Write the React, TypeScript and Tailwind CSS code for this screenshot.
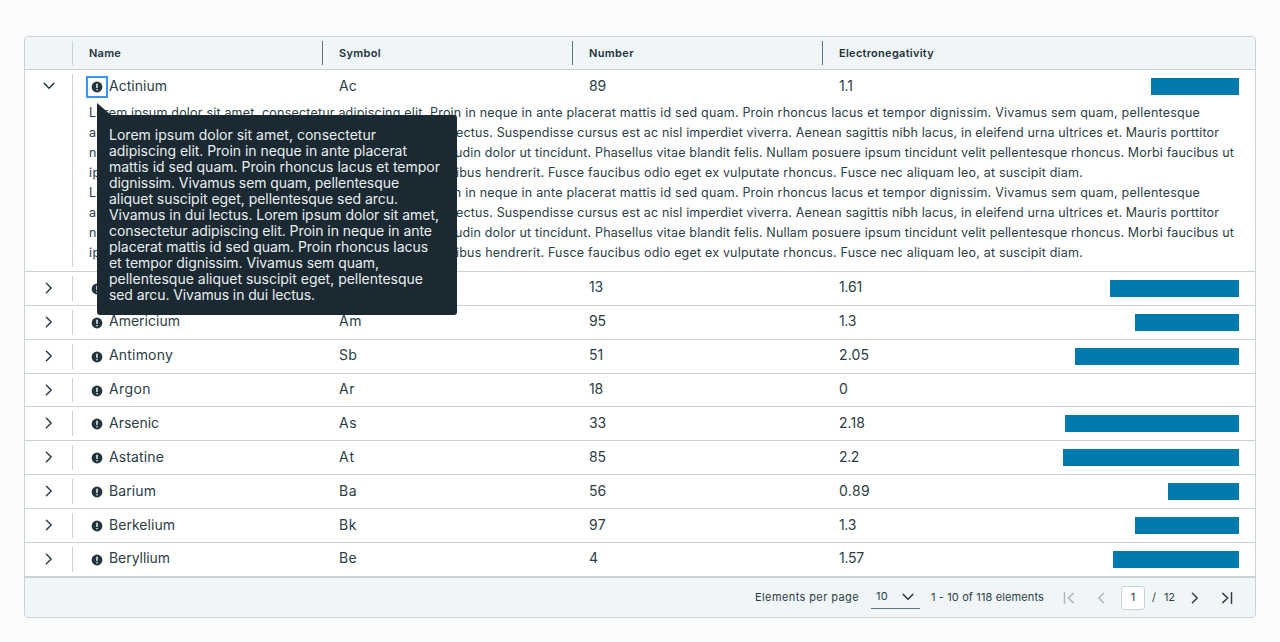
import { useLayoutEffect, useRef } from "react";

function Fit({ text, width }: { text: string; width: number }) {
  const ref = useRef<HTMLSpanElement>(null);
  useLayoutEffect(() => {
    const el = ref.current;
    if (!el) return;
    el.style.letterSpacing = "0px";
    const natural = el.getBoundingClientRect().width;
    el.style.letterSpacing = `${(width - natural) / text.length}px`;
  }, [text, width]);
  return (
    <span ref={ref} className="inline-block shrink-0 whitespace-pre">
      {text}
    </span>
  );
}

type Element = {
  name: string;
  nameWidth: number;
  symbol: string;
  symbolWidth: number;
  number: string;
  numberWidth: number;
  en: string;
  enWidth: number;
  bar: number;
  height: string;
};

const elements: Element[] = [
  { name: "Aluminium", nameWidth: 71, symbol: "Al", symbolWidth: 14, number: "13", numberWidth: 14, en: "1.61", enWidth: 23, bar: 129, height: "h-[34px] leading-[29px]" },
  { name: "Americium", nameWidth: 71, symbol: "Am", symbolWidth: 23, number: "95", numberWidth: 17, en: "1.3", enWidth: 17, bar: 104, height: "h-[34px] leading-[29px]" },
  { name: "Antimony", nameWidth: 64, symbol: "Sb", symbolWidth: 18, number: "51", numberWidth: 14, en: "2.05", enWidth: 30, bar: 164, height: "h-[34px] leading-[29px]" },
  { name: "Argon", nameWidth: 42, symbol: "Ar", symbolWidth: 16, number: "18", numberWidth: 14, en: "0", enWidth: 10, bar: 0, height: "h-[33px] leading-[29px]" },
  { name: "Arsenic", nameWidth: 50, symbol: "As", symbolWidth: 18, number: "33", numberWidth: 17, en: "2.18", enWidth: 26, bar: 174, height: "h-[34px] leading-[31px]" },
  { name: "Astatine", nameWidth: 55, symbol: "At", symbolWidth: 16, number: "85", numberWidth: 17, en: "2.2", enWidth: 20, bar: 176, height: "h-[34px] leading-[31px]" },
  { name: "Barium", nameWidth: 47, symbol: "Ba", symbolWidth: 18, number: "56", numberWidth: 17, en: "0.89", enWidth: 31, bar: 71, height: "h-[34px] leading-[31px]" },
  { name: "Berkelium", nameWidth: 66, symbol: "Bk", symbolWidth: 18, number: "97", numberWidth: 17, en: "1.3", enWidth: 17, bar: 104, height: "h-[34px] leading-[31px]" },
  { name: "Beryllium", nameWidth: 61, symbol: "Be", symbolWidth: 18, number: "4", numberWidth: 9, en: "1.57", enWidth: 25, bar: 126, height: "h-[34px] leading-[29px]" },
];

const detail: [string, number, string, number][] = [
  ["Lorem ipsum dolor sit amet, consectetur adipiscing elit. ", 341, "Proin in neque in ante placerat mattis id sed quam. Proin rhoncus lacus et tempor dignissim. Vivamus sem quam, pellentesque", 770],
  ["aliquet suscipit eget, pellentesque sed arcu. Vivamus in dui l", 367, "ectus. Suspendisse cursus est ac nisl imperdiet viverra. Aenean sagittis nibh lacus, in eleifend urna ultrices et. Mauris porttitor", 763],
  ["nisi vel ante aliquam, vitae elementum nulla iaculis. Sollicit", 366, "udin dolor ut tincidunt. Phasellus vitae blandit felis. Nullam posuere ipsum tincidunt velit pellentesque rhoncus. Morbi faucibus ut", 779],
  ["ipsum molestie, eu porta nunc lacinia. Praesent vitae fauc", 367, "ibus hendrerit. Fusce faucibus odio eget ex vulputate rhoncus. Fusce nec aliquam leo, at suscipit diam.", 627],
];

const tooltip: [string, number][] = [
  ["Lorem ipsum dolor sit amet, consectetur", 267],
  ["adipiscing elit. Proin in neque in ante placerat", 298],
  ["mattis id sed quam. Proin rhoncus lacus et tempor", 331],
  ["dignissim. Vivamus sem quam, pellentesque", 290],
  ["aliquet suscipit eget, pellentesque sed arcu.", 289],
  ["Vivamus in dui lectus. Lorem ipsum dolor sit amet,", 330],
  ["consectetur adipiscing elit. Proin in neque in ante", 323],
  ["placerat mattis id sed quam. Proin rhoncus lacus", 319],
  ["et tempor dignissim. Vivamus sem quam,", 270],
  ["pellentesque aliquet suscipit eget, pellentesque", 314],
  ["sed arcu. Vivamus in dui lectus.", 206],
];

function Chevron({ className = "" }: { className?: string }) {
  return (
    <svg viewBox="0 0 16 16" className={`size-4 shrink-0 ${className}`} fill="none" stroke="currentColor" strokeWidth="1.5" strokeLinecap="round" strokeLinejoin="round">
      <path d="M5.4 3.2 10.2 8 5.4 12.8" />
    </svg>
  );
}

function EdgeChevron({ className = "" }: { className?: string }) {
  return (
    <svg viewBox="0 0 16 16" className={`size-4 shrink-0 ${className}`} fill="none" stroke="currentColor" strokeWidth="1.5" strokeLinecap="round" strokeLinejoin="round">
      <path d="M3.7 3.4 8.8 8l-5.1 4.6M12.5 2.8v10.4" />
    </svg>
  );
}

function InfoIcon() {
  return (
    <svg viewBox="0 0 12 12" className="size-3 shrink-0 text-[#21333b]">
      <circle cx="6" cy="6" r="5.4" fill="currentColor" />
      <path d="M6 3.1v3.3" stroke="white" strokeWidth="1.4" strokeLinecap="round" />
      <circle cx="6" cy="8.7" r=".8" fill="white" />
    </svg>
  );
}

function HeaderCell({ text, width, last }: { text: string; width: number; last?: boolean }) {
  return (
    <div className={`flex h-6 items-center pl-4 ${last ? "grow" : "w-[250px] border-r border-[#5b7580]"}`}>
      <Fit text={text} width={width} />
    </div>
  );
}

function Tooltip() {
  return (
    <div className="absolute top-[25px] left-[9px] z-10 w-[360px]">
      <svg viewBox="0 0 14 12" className="block h-3 w-[14px]">
        <path d="M0 0v12h14z" fill="#1b2a32" />
      </svg>
      <div className="h-[200px] rounded-[3px] rounded-tl-none bg-[#1b2a32] p-3 text-[14px] leading-4 text-[#e9eef0]">
        {tooltip.map(([text, width]) => (
          <div key={text} className="h-4">
            <Fit text={text} width={width} />
          </div>
        ))}
      </div>
    </div>
  );
}

export default function App() {
  return (
    <div className="h-[642px] overflow-hidden bg-[#fbfdfd] px-6 pt-9 font-['Inter',sans-serif] text-[#21333b]">
      <div className="flex h-[582px] flex-col rounded-[4px] border border-[#c8d2d7] bg-white">
        <div className="flex h-[33px] shrink-0 items-center rounded-t-[3px] border-b border-[#c8d2d7] bg-[#f0f5f8] text-[11px] font-semibold">
          <div className="h-6 w-12 border-r border-[#c8d2d7]" />
          <HeaderCell text="Name" width={32} />
          <HeaderCell text="Symbol" width={42} />
          <HeaderCell text="Number" width={45} />
          <HeaderCell text="Electronegativity" width={95} last />
        </div>

        <div className="flex h-[202px] shrink-0 border-b border-[#c8d2d7] text-[#2b3e46]">
          <div className="my-1 flex w-12 justify-center border-r border-[#c8d2d7] pt-1">
            <Chevron className="rotate-90" />
          </div>
          <div className="grow">
            <div className="flex h-[33px] text-[14px] leading-[31px]">
              <div className="flex w-[250px] pl-[13px]">
                <div className="relative mt-[6px] flex size-[22px] items-center justify-center border-2 border-[#3598f8]">
                  <InfoIcon />
                  <Tooltip />
                </div>
                <div className="ml-[1px]">
                  <Fit text="Actinium" width={58} />
                </div>
              </div>
              <div className="w-[250px] pl-4"><Fit text="Ac" width={18} /></div>
              <div className="w-[250px] pl-4"><Fit text="89" width={17} /></div>
              <div className="flex grow justify-between px-4">
                <Fit text="1.1" width={14} />
                <div className="mt-2 h-[17px] w-[88px] bg-[#0079ad]" />
              </div>
            </div>
            <div className="pl-4 text-[12.5px] leading-5">
              {[...detail, ...detail].map(([lead, leadWidth, rest, restWidth], i) => (
                <div key={i} className="flex h-5">
                  <Fit text={lead} width={leadWidth} />
                  <Fit text={rest} width={restWidth} />
                </div>
              ))}
            </div>
          </div>
        </div>

        {elements.map((e) => (
          <div key={e.name} className={`flex shrink-0 border-b border-[#c8d2d7] text-[14px] text-[#2b3e46] ${e.height}`}>
            <div className="mt-1 mb-1 flex w-12 items-start justify-center border-r border-[#c8d2d7] pt-1">
              <Chevron />
            </div>
            <div className="flex w-[250px] pl-[18px]">
              <div className="mt-[11px] mr-[6px] h-3 leading-3"><InfoIcon /></div>
              <Fit text={e.name} width={e.nameWidth} />
            </div>
            <div className="w-[250px] pl-4"><Fit text={e.symbol} width={e.symbolWidth} /></div>
            <div className="w-[250px] pl-4"><Fit text={e.number} width={e.numberWidth} /></div>
            <div className="flex grow justify-between px-4">
              <Fit text={e.en} width={e.enWidth} />
              <div className="mt-2 h-[17px] bg-[#0079ad]" style={{ width: e.bar }} />
            </div>
          </div>
        ))}

        <div className="flex grow items-center rounded-b-[3px] border-t border-[#c8d2d7] bg-[#f0f5f8] pl-[730px] text-[11px] text-[#2b3e46]">
          <Fit text="Elements per page" width={104} />
          <div className="ml-3 flex h-[23px] w-[49px] items-center justify-between border-b border-[#5b7580] pr-1 pl-[5px]">
            <div className="pb-[2px]"><Fit text="10" width={12} /></div>
            <Chevron className="rotate-90" />
          </div>
          <div className="ml-[11px]"><Fit text="1 - 10 of 118 elements" width={113} /></div>
          <EdgeChevron className="ml-[17px] rotate-180 text-[#abb6bc]" />
          <Chevron className="ml-4 rotate-180 text-[#abb6bc]" />
          <div className="ml-3 flex h-6 w-6 items-center justify-center rounded-[3px] border border-[#c8d2d7] bg-white">1</div>
          <div className="ml-[7px]">/</div>
          <div className="ml-2"><Fit text="12" width={11} /></div>
          <Chevron className="ml-3" />
          <EdgeChevron className="ml-4" />
        </div>
      </div>
    </div>
  );
}
